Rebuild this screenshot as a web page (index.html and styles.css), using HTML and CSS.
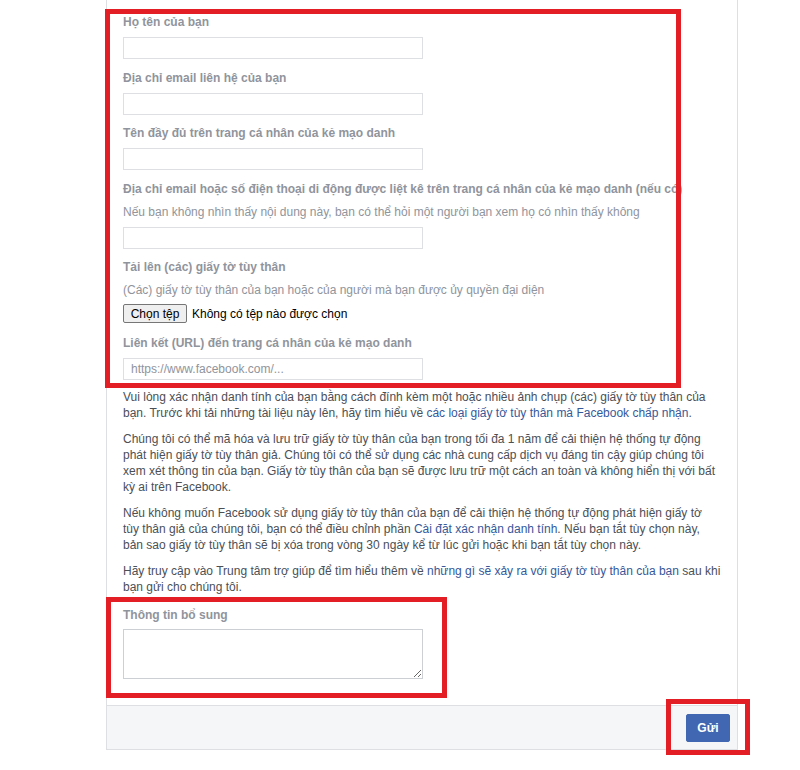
FILE: index.html
```html
<!DOCTYPE html>
<html lang="vi">
<head>
<meta charset="utf-8">
<title>Báo cáo tài khoản mạo danh</title>
<link rel="stylesheet" href="styles.css">
</head>
<body>
<div class="page">
  <div class="panel">
    <div class="content">
      <div class="field">
        <div class="label">Họ tên của bạn</div>
        <input class="text-input" type="text">
      </div>
      <div class="field">
        <div class="label">Địa chỉ email liên hệ của bạn</div>
        <input class="text-input" type="text">
      </div>
      <div class="field">
        <div class="label">Tên đầy đủ trên trang cá nhân của kẻ mạo danh</div>
        <input class="text-input" type="text">
      </div>
      <div class="field">
        <div class="label">Địa chỉ email hoặc số điện thoại di động được liệt kê trên trang cá nhân của kẻ mạo danh (nếu có)</div>
        <div class="helper">Nếu bạn không nhìn thấy nội dung này, bạn có thể hỏi một người bạn xem họ có nhìn thấy không</div>
        <input class="text-input" type="text">
      </div>
      <div class="field field-upload">
        <div class="label">Tải lên (các) giấy tờ tùy thân</div>
        <div class="helper">(Các) giấy tờ tùy thân của bạn hoặc của người mà bạn được ủy quyền đại diện</div>
        <div class="file-row">
          <span class="file-btn">Chọn tệp</span>
          <span class="file-name">Không có tệp nào được chọn</span>
        </div>
      </div>
      <div class="field field-last">
        <div class="label">Liên kết (URL) đến trang cá nhân của kẻ mạo danh</div>
        <input class="text-input" type="text" placeholder="https://www.facebook.com/...">
      </div>

      <p class="para">Vui lòng xác nhận danh tính của bạn bằng cách đính kèm một hoặc nhiều ảnh chụp (các) giấy tờ tùy thân của bạn. Trước khi tải những tài liệu này lên, hãy tìm hiểu về <a class="link" href="#">các loại giấy tờ tùy thân mà Facebook chấp nhận</a>.</p>
      <p class="para">Chúng tôi có thể mã hóa và lưu trữ giấy tờ tùy thân của bạn trong tối đa 1 năm để cải thiện hệ thống tự động phát hiện giấy tờ tùy thân giả. Chúng tôi có thể sử dụng các nhà cung cấp dịch vụ đáng tin cậy giúp chúng tôi xem xét thông tin của bạn. Giấy tờ tùy thân của bạn sẽ được lưu trữ một cách an toàn và không hiển thị với bất kỳ ai trên Facebook.</p>
      <p class="para">Nếu không muốn Facebook sử dụng giấy tờ tùy thân của bạn để cải thiện hệ thống tự động phát hiện giấy tờ tùy thân giả của chúng tôi, bạn có thể điều chỉnh phần <a class="link" href="#">Cài đặt xác nhận danh tính</a>. Nếu bạn tắt tùy chọn này, bản sao giấy tờ tùy thân sẽ bị xóa trong vòng 30 ngày kể từ lúc gửi hoặc khi bạn tắt tùy chọn này.</p>
      <p class="para para-last">Hãy truy cập vào Trung tâm trợ giúp để tìm hiểu thêm về <a class="link" href="#">những gì sẽ xảy ra với giấy tờ tùy thân của bạn</a> sau khi bạn gửi cho chúng tôi.</p>

      <div class="field field-extra">
        <div class="label">Thông tin bổ sung</div>
        <textarea class="text-area"></textarea>
      </div>
    </div>
    <div class="footer">
      <button class="submit" type="button">Gửi</button>
    </div>
  </div>

  <div class="mark mark-form"></div>
  <div class="mark mark-extra"></div>
  <div class="mark mark-submit"></div>
</div>
</body>
</html>
```

FILE: styles.css
```css
* {
  box-sizing: border-box;
}

html, body {
  margin: 0;
  padding: 0;
  background: #ffffff;
}

body {
  font-family: "Liberation Sans", Arial, "Noto Sans", sans-serif;
  font-size: 12px;
  color: #4b4f56;
}

.page {
  position: relative;
  width: 800px;
  height: 770px;
  padding-left: 106px;
}

.panel {
  width: 632px;
  background: #ffffff;
  border: 1px solid #dddfe2;
  border-top: none;
}

.content {
  padding: 14px 16px 26px 16px;
}

.field {
  margin-bottom: 10.5px;
}

.field-upload {
  margin-bottom: 12px;
}

.field-last {
  margin-bottom: 9px;
}

.label {
  font-weight: bold;
  color: #90949c;
  line-height: 16px;
  margin-bottom: 7px;
  white-space: nowrap;
}

.helper {
  color: #90949c;
  line-height: 16px;
  margin-bottom: 7px;
}

.field-upload .helper {
  margin-bottom: 6px;
}

.text-input {
  display: block;
  width: 300px;
  height: 22px;
  margin: 0;
  padding: 0 7px;
  border: 1px solid #dddfe2;
  border-radius: 0;
  font-family: inherit;
  font-size: 12px;
  color: #1d2129;
  background: #ffffff;
  outline: none;
}

.text-input::placeholder {
  color: #90949c;
}

.file-row {
  display: flex;
  align-items: center;
  gap: 5px;
  height: 19px;
}

.file-btn {
  display: inline-flex;
  align-items: center;
  justify-content: center;
  width: 64px;
  height: 19px;
  border: 1px solid #767676;
  border-radius: 2px;
  background: #efefef;
  color: #000000;
  font-size: 12px;
}

.file-name {
  color: #000000;
  font-size: 12px;
}

.para {
  margin: 0 0 10px;
  line-height: 16px;
  color: #4b4f56;
}

.para-last {
  margin-bottom: 12px;
}

.link {
  color: #365899;
  text-decoration: none;
}

.field-extra {
  margin-bottom: 0;
}

.field-extra .label {
  margin-bottom: 6px;
}

.text-area {
  display: block;
  width: 300px;
  height: 50px;
  margin: 0;
  padding: 4px 6px;
  border: 1px solid #ccd0d5;
  border-radius: 0;
  font-family: inherit;
  font-size: 12px;
  resize: both;
  outline: none;
}

.footer {
  display: flex;
  justify-content: flex-end;
  align-items: center;
  height: 44px;
  padding-right: 7px;
  background: #f5f6f7;
  border-top: 1px solid #dddfe2;
}

.submit {
  width: 44px;
  height: 28px;
  margin: 0;
  padding: 0;
  border: 1px solid #4267b2;
  border-radius: 2px;
  background: #4267b2;
  color: #ffffff;
  font-family: inherit;
  font-size: 12px;
  font-weight: bold;
}

.mark {
  position: absolute;
  border: 5px solid #e31e25;
  pointer-events: none;
}

.mark-form {
  left: 105px;
  top: 9px;
  width: 576px;
  height: 379px;
}

.mark-extra {
  left: 106px;
  top: 597px;
  width: 341px;
  height: 101px;
}

.mark-submit {
  left: 666px;
  top: 699px;
  width: 84px;
  height: 56px;
}
```
